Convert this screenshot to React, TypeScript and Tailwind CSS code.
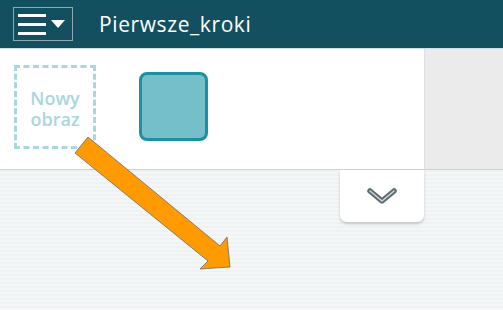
export default function App() {
  return (
    <div
      className="relative w-[503px] h-[310px] overflow-hidden flex flex-col bg-white"
      style={{ fontFamily: '"Open Sans", "Noto Sans", sans-serif' }}
    >
      {/* Top bar */}
      <header className="h-[49px] shrink-0 bg-[#12505f] border-b border-[#cfe3e6] flex items-center">
        <button className="ml-[13px] w-[60px] h-[34px] border border-[#8fa9b0] flex items-center pl-[4px] gap-[5px]">
          <span className="flex flex-col gap-[6px]">
            <span className="block w-[28px] h-[3px] bg-white" />
            <span className="block w-[28px] h-[3px] bg-white" />
            <span className="block w-[28px] h-[3px] bg-white" />
          </span>
          <svg width="14" height="10" viewBox="0 0 14 10">
            <path d="M0 1 L14 1 L7 9 Z" fill="#ffffff" />
          </svg>
        </button>
        <h1 className="ml-[26px] text-[21px] leading-none tracking-[0.6px] text-white">Pierwsze_kroki</h1>
      </header>

      {/* Image strip */}
      <div className="h-[121px] shrink-0 flex border-b border-[#cfcfcf] shadow-[0_1px_2px_rgba(0,0,0,0.12)]">
        <div className="w-[424px] bg-white flex items-start pt-[16px] pl-[14px]">
          <div className="w-[82px] h-[84px] border-[3px] border-dashed border-[#a8d7dd] flex flex-col items-center justify-center pt-[3px]">
            <span className="block text-[18px] leading-[21px] font-semibold text-[#a8d7dd]">Nowy</span>
            <span className="block text-[18px] leading-[21px] font-semibold text-[#a8d7dd]">obraz</span>
          </div>
          <div className="ml-[43px] mt-[7px] w-[69px] h-[69px] rounded-[8px] border-[3px] border-[#1c8fa1] bg-[#74bfca]" />
        </div>
        <div className="flex-1 bg-[#ebebeb] border-l border-[#e0e0e0]" />
      </div>

      {/* Canvas area */}
      <div className="flex-1 bg-[repeating-linear-gradient(180deg,#eef2f3_0px,#eef2f3_2px,#f4f6f7_2px,#f4f6f7_4px)]">
        <div className="ml-[340px] w-[84px] h-[52px] bg-white rounded-b-[7px] shadow-[0_2px_3px_rgba(0,0,0,0.18)] flex items-center justify-center">
          <svg width="34" height="22" viewBox="0 0 34 22" className="mt-[1px]">
            <path d="M5 5 L17 15 L29 5" fill="none" stroke="#5e6e73" strokeWidth="5.5" strokeLinejoin="round" strokeLinecap="round" />
            <path d="M5 5 L17 15 L29 5" fill="none" stroke="#d3d9db" strokeWidth="1.4" strokeLinejoin="round" strokeLinecap="round" />
          </svg>
        </div>
      </div>

      {/* Orange pointer arrow */}
      <svg className="absolute left-0 top-0 pointer-events-none" width="503" height="310" viewBox="0 0 503 310">
        <polygon
          points="88,137 220,246 227,237 230,267 200,269 208,261 75,153"
          fill="#ff9a00"
          stroke="#6b6b6b"
          strokeWidth="0.8"
          strokeLinejoin="miter"
        />
      </svg>
    </div>
  )
}
